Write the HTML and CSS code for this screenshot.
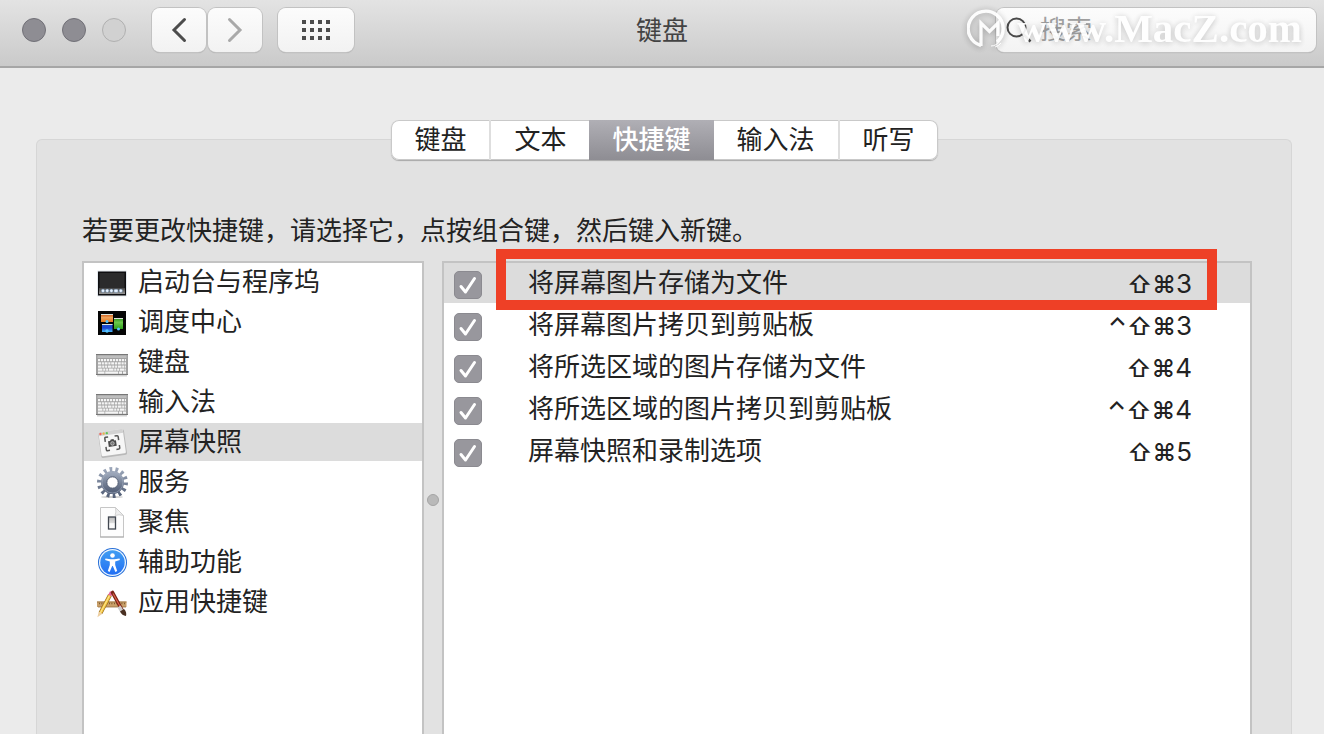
FILE: index.html
```
<!DOCTYPE html>
<html lang="zh-CN">
<head>
<meta charset="utf-8">
<meta name="viewport" content="width=device-width, initial-scale=1">
<title>键盘</title>
<link rel="stylesheet" href="styles.css">
</head>
<body>
<svg class="defs" aria-hidden="true">
  <defs>
    <linearGradient id="g-orange" x1="0" y1="0" x2="0" y2="1"><stop offset="0" stop-color="#c9500e"/><stop offset=".45" stop-color="#f0a35c"/><stop offset="1" stop-color="#e87a1c"/></linearGradient>
    <linearGradient id="g-blue" x1="0" y1="0" x2="0" y2="1"><stop offset="0" stop-color="#1c50c8"/><stop offset=".5" stop-color="#1a46d4"/><stop offset="1" stop-color="#4ab8f4"/></linearGradient>
    <linearGradient id="g-green" x1="0" y1="0" x2="0" y2="1"><stop offset="0" stop-color="#2c8a1c"/><stop offset=".4" stop-color="#6cc84c"/><stop offset="1" stop-color="#2ea01c"/></linearGradient>
    <linearGradient id="g-gear" x1="0" y1="0" x2="0" y2="1"><stop offset="0" stop-color="#9aa5b8"/><stop offset="1" stop-color="#56627a"/></linearGradient>
    <linearGradient id="g-acc" x1="0" y1="0" x2="0" y2="1"><stop offset="0" stop-color="#3f9df2"/><stop offset="1" stop-color="#2370f4"/></linearGradient>
    <linearGradient id="g-dock" x1="0" y1="0" x2="0" y2="1"><stop offset="0" stop-color="#444"/><stop offset="1" stop-color="#999"/></linearGradient>
    <linearGradient id="g-switch" x1="0" y1="0" x2="0" y2="1"><stop offset="0" stop-color="#bbb"/><stop offset=".5" stop-color="#ddd"/><stop offset=".55" stop-color="#fafafa"/></linearGradient>
  </defs>
  <symbol id="i-check" viewBox="0 0 28 28"><path d="M7 15.500l4.500 5.500L20.500 7.500" fill="none" stroke="#fff" stroke-width="3" stroke-linecap="round" stroke-linejoin="round"/></symbol>
  <symbol id="i-keyboard" viewBox="0 0 32 32">
    <path d="M1 29h30v1.500H1z" fill="#000" opacity=".18"/>
    <rect x="0" y="8" width="32" height="21" rx="1" fill="#a2a2a2"/>
    <path d="M0 8h32v1H0z" fill="#777"/>
    <path d="M1.500 9.500h29V12h-29z" fill="#bebebe"/>
    <g stroke="#f4f4f4" stroke-width="2.200" fill="none">
      <path d="M2 14.200h28" stroke-dasharray="2.200 .8"/>
      <path d="M2 17.400h28" stroke-dasharray="3 .7 2.200 .7"/>
      <path d="M2 20.600h28" stroke-dasharray="3.500 .7 2.200 .7 2.200 .7"/>
      <path d="M2 23.700h28" stroke-dasharray="4.500 .7 2.200 .7 2.200 .7"/>
      <path d="M2 26.600h6.500M9.200 26.600h13M23 26.600h3M27 26.600h3"/>
    </g>
    <path d="M0 28.500h32" stroke="#777"/>
  </symbol>
</svg>

<header class="titlebar">
  <div class="lights">
    <button class="light" type="button" aria-label="关闭"></button>
    <button class="light" type="button" aria-label="最小化"></button>
    <button class="light light-off" type="button" aria-label="缩放"></button>
  </div>
  <nav class="nav">
    <button class="tool" type="button" aria-label="后退"><svg width="16" height="26" viewBox="0 0 16 26"><path d="M13.500 2.500L3 13l10.500 10.500" fill="none" stroke="#4c4c4c" stroke-width="3" stroke-linecap="round"/></svg></button>
    <button class="tool" type="button" aria-label="前进"><svg width="16" height="26" viewBox="0 0 16 26"><path d="M2.500 2.500L13 13 2.500 23.500" fill="none" stroke="#a9a9a9" stroke-width="3" stroke-linecap="round"/></svg></button>
  </nav>
  <button class="tool tool-grid" type="button" aria-label="显示全部"><svg width="28" height="20" viewBox="0 0 28 20"><path d="M0 2h28M0 10h28M0 18h28" stroke="#4c4c4c" stroke-width="4" stroke-dasharray="4 4"/></svg></button>
  <h1 class="title">键盘</h1>
  <label class="search">
    <svg width="26" height="26" viewBox="0 0 26 26"><circle cx="10.500" cy="10.500" r="9" fill="none" stroke="#4a4a4a" stroke-width="2"/><path d="M17 17l7.500 7.500" stroke="#4a4a4a" stroke-width="2.500"/></svg>
    <input type="search" placeholder="搜索" aria-label="搜索">
  </label>
  <div class="watermark">
    <svg width="42" height="42" viewBox="0 0 42 42"><path d="M14 38.500A17.500 17.500 0 1 1 30 35" fill="none" stroke="#fff" stroke-width="3.400"/><path d="M14 39V16l8.500 8.500L31 16v13" fill="none" stroke="#fff" stroke-width="3.200"/><path d="M24 39q6 0 9-6M28 40q4-1 6-4" fill="none" stroke="#fff" stroke-width="1"/></svg>
    <span>www.MacZ.com</span>
  </div>
</header>

<main class="content">
  <section class="panel">
    <div class="tabs" role="tablist">
      <button class="tab" type="button" role="tab">键盘</button>
      <button class="tab tab-split" type="button" role="tab">文本</button>
      <button class="tab tab-active" type="button" role="tab" aria-selected="true">快捷键</button>
      <button class="tab" type="button" role="tab">输入法</button>
      <button class="tab tab-split" type="button" role="tab">听写</button>
    </div>
    <p class="hint">若要更改快捷键，请选择它，点按组合键，然后键入新键。</p>
    <div class="split">
      <ul class="categories">
        <li><button class="category" type="button">
          <svg class="icon" viewBox="0 0 32 32"><rect x="1" y="4.500" width="30" height="26" rx="1" fill="#c9d4de" opacity=".5"/><rect x="2" y="5.500" width="28" height="24" fill="#0e0e10"/><rect x="3.500" y="7" width="25" height="15" fill="#2b2b2c"/><path d="M3 22h26v6H3z" fill="url(#g-dock)"/><g fill="#e8f2ff" stroke="#4f7399" stroke-width=".4"><circle cx="7" cy="24.800" r="1.700"/><circle cx="11.200" cy="24.800" r="1.700"/><circle cx="15.400" cy="24.800" r="1.700"/><rect x="18" y="23.200" width="4" height="3.200" rx="1"/><circle cx="24.800" cy="24.800" r="1.700"/></g></svg>
          <span>启动台与程序坞</span></button></li>
        <li><button class="category" type="button">
          <svg class="icon" viewBox="0 0 32 32"><rect x="2" y="5" width="28" height="24" fill="#050505"/><rect x="5" y="8" width="12" height="8" fill="url(#g-orange)"/><rect x="6" y="18" width="10.500" height="8" fill="url(#g-blue)"/><rect x="18" y="12" width="9" height="11" fill="url(#g-green)"/><path d="M5 8.500h12M18 12.500h9M6 18.500h10.500" stroke="#dfe6df" stroke-width="1"/><g fill="#55c4ff"><circle cx="11" cy="15.500" r="1.500"/><circle cx="11" cy="25" r="1.700"/><circle cx="22.500" cy="23" r="1.500"/></g></svg>
          <span>调度中心</span></button></li>
        <li><button class="category" type="button"><svg class="icon"><use href="#i-keyboard"/></svg><span>键盘</span></button></li>
        <li><button class="category" type="button"><svg class="icon"><use href="#i-keyboard"/></svg><span>输入法</span></button></li>
        <li><button class="category category-active" type="button">
          <svg class="icon" viewBox="0 0 32 32"><g transform="rotate(-8 16 17)"><rect x="3.500" y="5" width="26" height="25.500" rx="1.500" fill="#aaa" opacity=".7"/><rect x="4" y="4.500" width="24.500" height="24.500" rx="1.500" fill="#f6f6f6"/><path d="M4 6q0-1.500 1.500-1.500h21.500q1.500 0 1.500 1.500v2.500H4z" fill="#d2d2d2"/><circle cx="5.800" cy="6.500" r="1.200" fill="#f2655c"/><circle cx="9" cy="6.500" r="1.200" fill="#e8b44c"/><circle cx="12.200" cy="6.500" r="1.200" fill="#5fc454"/><path d="M9.500 15v-3.500q0-1 1-1H13M19.500 10.500H22q1 0 1 1V15M23 20v3q0 1-1 1h-2.500M13 24h-2.500q-1 0-1-1v-3" fill="none" stroke="#555" stroke-width="1.500"/><path d="M12.300 14.800h2l1-1.500h2.500l1 1.500h1.500v5.700h-8z" fill="#4a4a4a"/><circle cx="16.400" cy="17.500" r="1.800" fill="#777" stroke="#ddd" stroke-width=".6"/></g></svg>
          <span>屏幕快照</span></button></li>
        <li><button class="category" type="button">
          <svg class="icon" viewBox="0 0 32 32"><ellipse cx="16" cy="31" rx="11" ry="1" fill="#000" opacity=".2"/><circle cx="16.500" cy="16.500" r="13" fill="none" stroke="url(#g-gear)" stroke-width="5" pathLength="140" stroke-dasharray="4.600 5.400"/><circle cx="16.500" cy="16.500" r="8.500" fill="none" stroke="url(#g-gear)" stroke-width="6"/><circle cx="16.500" cy="16.500" r="5.700" fill="#fff" stroke="#515c73" stroke-width="1"/><circle cx="16.500" cy="16.500" r="10.500" fill="none" stroke="#a4afc1" stroke-width=".6"/></svg>
          <span>服务</span></button></li>
        <li><button class="category" type="button">
          <svg class="icon" viewBox="0 0 32 32"><path d="M4.500 1.500h15l8 8v21.500h-23z" fill="#fdfdfd" stroke="#c6c6c6" stroke-width="1"/><path d="M4 31h24" stroke="#aaa"/><path d="M19.500 1.500q1 5-.5 8 4-1.500 8.500 0z" fill="#eee" stroke="#c8c8c8" stroke-width=".8"/><rect x="12.500" y="11" width="7" height="12" fill="url(#g-switch)" stroke="#414750" stroke-width="1.300"/></svg>
          <span>聚焦</span></button></li>
        <li><button class="category" type="button">
          <svg class="icon" viewBox="0 0 32 32"><circle cx="16.500" cy="16.500" r="14.500" fill="#2870d8"/><circle cx="16.500" cy="16.500" r="13.500" fill="#eef7ff"/><circle cx="16.500" cy="16.500" r="12.200" fill="url(#g-acc)"/><circle cx="16.500" cy="9.500" r="2.300" fill="#fff"/><path d="M9.500 12.400l5 .8h4l5-.8.4 1.700-4.700 1.500v3.500l2 6-1.800.8-2.600-6h-.6l-2.600 6-1.800-.8 2-6v-3.500l-4.700-1.500z" fill="#fff"/></svg>
          <span>辅助功能</span></button></li>
        <li><button class="category" type="button">
          <svg class="icon" viewBox="0 0 32 32"><rect x="1" y="15.500" width="29.500" height="5.500" fill="#c9a06a"/><path d="M1 16h29.500M2 21h28" stroke="#98703c" stroke-width=".8"/><path d="M3 17.500h27" stroke="#6d4b22" stroke-width="1.600" stroke-dasharray=".8 1.700"/><path d="M14 9L4.500 27" stroke="#91661c" stroke-width="4"/><path d="M14 9L4.500 27" stroke="#f3c642" stroke-width="2.800"/><path d="M13.500 9.500L4.300 27" stroke="#ffe796" stroke-width="1"/><path d="M15.500 6L13.800 9.500" stroke="#e5679c" stroke-width="3.400"/><path d="M2.700 25.800l3.700 2-5 3.500z" fill="#edcea0"/><path d="M16.500 6.500L26 24" stroke="#7a2317" stroke-width="3.600" stroke-linecap="round"/><path d="M17 7.500L25.500 23" stroke="#df654b" stroke-width="1.100"/><path d="M23 20.500l3 5" stroke="#ccc" stroke-width="3.600"/><path d="M24 25.500l4-2.500q3 3 2 7-4-.5-6-4.500z" fill="#493022"/></svg>
          <span>应用快捷键</span></button></li>
      </ul>
      <div class="divider"><span class="handle"></span></div>
      <div class="shortcuts">
        <table class="table">
          <tbody>
            <tr class="row-active"><td class="cell-check"><span class="check"><input id="s1" type="checkbox" checked><svg><use href="#i-check"/></svg></span></td><td><label for="s1">将屏幕图片存储为文件</label></td><td class="keys"><b>⇧⌘</b>3</td></tr>
            <tr><td class="cell-check"><span class="check"><input id="s2" type="checkbox" checked><svg><use href="#i-check"/></svg></span></td><td><label for="s2">将屏幕图片拷贝到剪贴板</label></td><td class="keys"><b>⌃⇧⌘</b>3</td></tr>
            <tr><td class="cell-check"><span class="check"><input id="s3" type="checkbox" checked><svg><use href="#i-check"/></svg></span></td><td><label for="s3">将所选区域的图片存储为文件</label></td><td class="keys"><b>⇧⌘</b>4</td></tr>
            <tr><td class="cell-check"><span class="check"><input id="s4" type="checkbox" checked><svg><use href="#i-check"/></svg></span></td><td><label for="s4">将所选区域的图片拷贝到剪贴板</label></td><td class="keys"><b>⌃⇧⌘</b>4</td></tr>
            <tr><td class="cell-check"><span class="check"><input id="s5" type="checkbox" checked><svg><use href="#i-check"/></svg></span></td><td><label for="s5">屏幕快照和录制选项</label></td><td class="keys"><b>⇧⌘</b>5</td></tr>
          </tbody>
        </table>
        <div class="highlight"></div>
      </div>
    </div>
  </section>
</main>
</body>
</html>
```
FILE: styles.css
```
* { box-sizing: border-box; }

body {
  margin: 0;
  height: 100vh;
  display: flex;
  flex-direction: column;
  overflow: hidden;
  background: #ebebeb;
  color: #222;
  font: 26px/36px "Liberation Sans", "Noto Sans CJK SC", sans-serif;
}

button, input { font: inherit; color: inherit; }
.defs { position: absolute; width: 0; height: 0; }

.titlebar {
  position: relative;
  display: flex;
  align-items: center;
  height: 68px;
  padding: 0 8px 6px 22px;
  background: linear-gradient(#e3e3e3, #cacaca);
  border-bottom: 2px solid #a6a6a6;
}

.lights { display: flex; gap: 16px; }
.light {
  width: 24px;
  height: 24px;
  padding: 0;
  border: 1px solid #717077;
  border-radius: 50%;
  background: #8e8d93;
}
.light-off { background: #d1d1d1; border-color: #b0b0b0; }

.nav { display: flex; gap: 2px; margin: 0 16px 0 26px; }
.tool {
  display: grid;
  place-items: center;
  width: 54px;
  height: 44px;
  padding: 0;
  border: 0;
  border-radius: 8px;
  background: linear-gradient(#fcfcfc, #f2f2f2);
  box-shadow: 0 0 0 1px #c2c2c2, 0 1px 1px 0 #a3a3a3;
}
.tool-grid { width: 76px; }

.title {
  position: absolute;
  inset: 13px 0 auto;
  margin: 0;
  font-size: 26px;
  font-weight: 400;
  text-align: center;
  color: #434343;
  pointer-events: none;
}

.search {
  display: flex;
  align-items: center;
  gap: 8px;
  width: 320px;
  height: 44px;
  margin-left: auto;
  padding: 0 10px;
  border-radius: 8px;
  background: linear-gradient(#fcfcfc, #f3f3f3);
  box-shadow: 0 0 0 1px #c2c2c2, 0 1px 1px 0 #a3a3a3;
}
.search svg { flex: none; }
.search input {
  flex: 1;
  min-width: 0;
  height: 36px;
  padding: 0;
  border: 0;
  outline: 0;
  background: none;
}
.search input::placeholder { color: #a0a0a0; opacity: 1; }

.watermark {
  position: absolute;
  top: 6px;
  right: 22px;
  display: flex;
  align-items: center;
  gap: 8px;
  color: #fff;
  font: bold 41px/44px "Liberation Serif", serif;
  text-shadow: 0 1px 6px rgba(0, 0, 0, .24);
  opacity: .92;
  pointer-events: none;
}
.watermark svg { filter: drop-shadow(0 1px 3px rgba(0, 0, 0, .3)); }

.content {
  flex: 1;
  display: flex;
  min-height: 0;
  padding: 71px 32px 0 36px;
}
.panel {
  flex: 1;
  display: flex;
  flex-direction: column;
  min-width: 0;
  padding: 0 39px 0 45px;
  border: 1px solid #d6d6d6;
  border-bottom: 0;
  border-radius: 6px 6px 0 0;
  background: #e2e2e2;
}

.tabs {
  display: flex;
  align-self: center;
  height: 40px;
  margin: -20px 5px 0 0;
  border-radius: 8px;
  background: #fff;
  box-shadow: inset 0 0 0 1px #c9c9c9, 0 1px 1px #a8a8a8;
}
.tab {
  padding: 0 23px;
  border: 0;
  background: none;
  line-height: 40px;
}
.tab-split { border-left: 2px solid #dedede; }
.tab-active {
  color: #fff;
  font-weight: 500;
  background: linear-gradient(#b0afb5, #8e8d93);
}

.hint { margin: 53px 0 12px; }

.split { flex: 1; display: flex; min-height: 0; }
.categories {
  width: 342px;
  margin: 0;
  padding: 0;
  list-style: none;
  border: 2px solid #c3c3c3;
  border-bottom: 0;
  background: #fff;
}
.categories li { margin-bottom: 2px; }
.category {
  display: flex;
  align-items: center;
  gap: 10px;
  width: 100%;
  height: 38px;
  padding: 0 12px;
  border: 0;
  background: none;
  text-align: left;
}
.category-active { background: #dcdcdc; }
.icon { flex: none; width: 32px; height: 32px; }

.divider { display: grid; place-items: center; width: 18px; padding-top: 4px; }
.handle {
  width: 12px;
  height: 12px;
  border: 1px solid #a4a4a4;
  border-radius: 50%;
  background: #b9b9b9;
}

.shortcuts {
  position: relative;
  flex: 1;
  border: 2px solid #c3c3c3;
  border-bottom: 0;
  background: #fff;
}
.table {
  width: 100%;
  margin-top: -2px;
  border-spacing: 0 2px;
}
.table td { height: 40px; padding: 0; white-space: nowrap; }
.row-active { background: #dcdcdc; }
.table .cell-check { width: 84px; padding: 4px 0 0 10px; }
.check { display: grid; width: 28px; height: 28px; }
.check > * { grid-area: 1 / 1; width: 28px; height: 28px; }
.check svg { pointer-events: none; }
.check input {
  appearance: none;
  margin: 0;
  border: 1px solid #8b8a90;
  border-radius: 5px;
  background: #98979d;
}
.table .keys {
  padding: 2px 58px 0 0;
  text-align: right;
  font-family: Inter, "DejaVu Sans", sans-serif;
}
.keys b { font-size: 24px; font-weight: 500; }
.highlight {
  position: absolute;
  top: -14px;
  left: 52px;
  right: 33px;
  height: 61px;
  border: 10px solid #ee4026;
  pointer-events: none;
}
```
